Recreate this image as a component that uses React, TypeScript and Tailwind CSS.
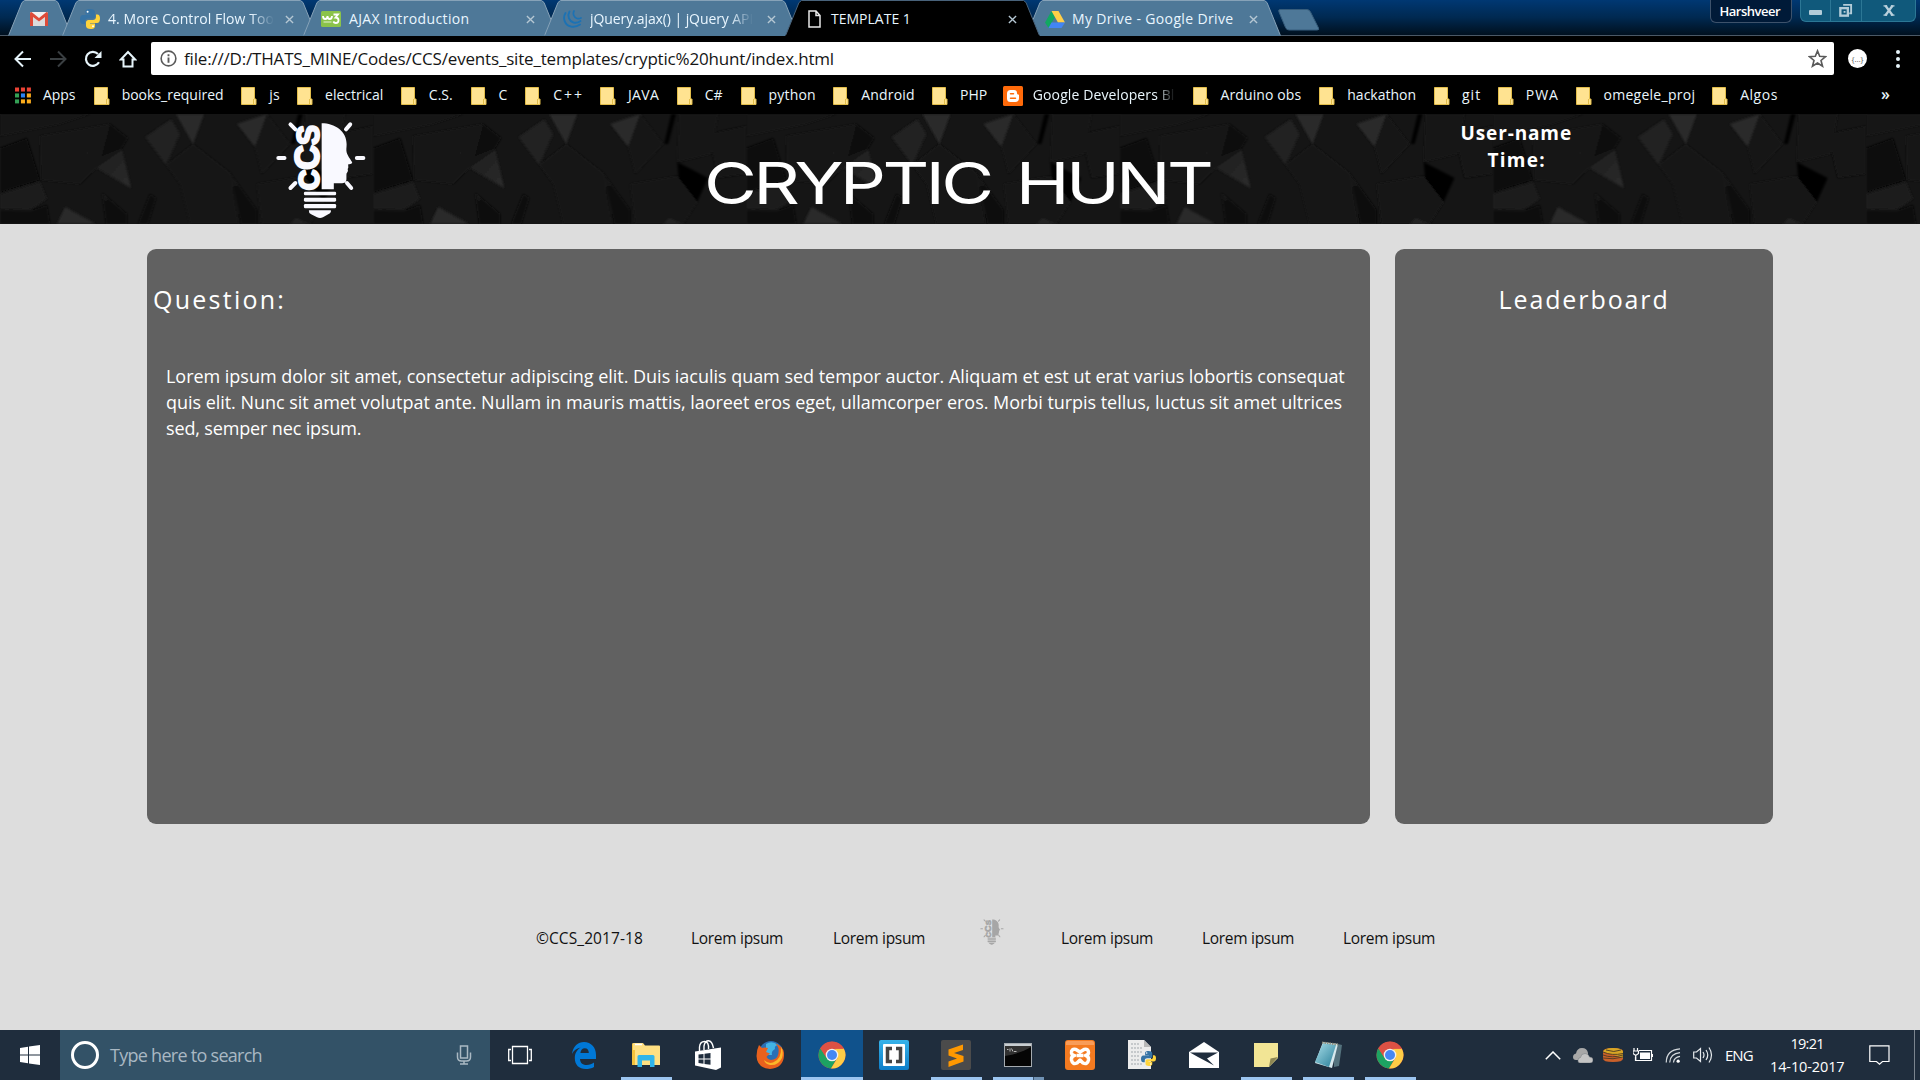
import { useLayoutEffect, useRef, useState } from "react";
import type { ReactNode } from "react";

/* Single line of text tracked out (or in) to fill a given measure. */
function Fit({ w, className = "", children }: { w: number; className?: string; children: string }) {
  const ref = useRef<HTMLSpanElement>(null);
  const [tracking, setTracking] = useState(0);
  useLayoutEffect(() => {
    const el = ref.current;
    if (!el) return;
    el.style.letterSpacing = "0px";
    const next = (w - el.offsetWidth) / Math.max(children.length - 1, 1);
    el.style.letterSpacing = next + "px";
    setTracking(next);
  }, [w, children]);
  return (
    <span className={"block shrink-0 whitespace-nowrap " + className} style={{ width: w }}>
      <span ref={ref} className="inline-block whitespace-pre" style={{ letterSpacing: tracking }}>
        {children}
      </span>
    </span>
  );
}

function Bulb({ className, color = "#f9f9ff" }: { className: string; color?: string }) {
  return (
    <svg viewBox="44 22 280 294" className={"overflow-visible " + className} fill={color} stroke="none" preserveAspectRatio="none">
      <path d="M186 29 C226 29 262 52 262 92 C262 102 260 108 262 116 C266 130 278 142 279 147 C278 151 270 151 267 152 C266 158 269 163 265 166 C268 171 264 176 262 179 C260 190 264 200 258 206 C250 212 232 207 223 209 L223 227 L186 227 Z" />
      <g stroke={color} strokeWidth="12" strokeLinecap="round">
        <path d="M54 133H73M293 133H313M91 32L106 47M273 32L260 47M91 223L106 208M276 223L263 208" />
      </g>
      <rect x="132" y="234" width="98" height="11" rx="4" />
      <rect x="132" y="252" width="98" height="12" rx="4" />
      <rect x="132" y="271" width="98" height="13" rx="4" />
      <path d="M147 290H214Q216 298 206 302L190 311Q181 315 172 311L154 302Q146 298 147 290Z" />
      <text
        transform="translate(178 230) rotate(-90)"
        fontFamily="Liberation Sans, sans-serif"
        fontWeight="700"
        textLength="196"
        lengthAdjust="spacingAndGlyphs"
        stroke={color}
        strokeWidth="7"
        strokeLinejoin="round"
      >
        <tspan fontSize="90">C</tspan>
        <tspan fontSize="108">C</tspan>
        <tspan fontSize="94">S</tspan>
      </text>
    </svg>
  );
}

/* ---------- browser chrome ---------- */

const GmailIcon = () => (
  <svg viewBox="0 0 18 14" className="h-[14px] w-[18px]">
    <rect width="18" height="14" rx="1.5" fill="#f1f1f1" />
    <path d="M3 14V5l6 4.5L15 5v9z" fill="#dcdcdc" />
    <path d="M0 14V1.5Q0 0 1.5 0L9 6l7.500-6Q18 0 18 1.500V14h-3V5L9 9.600 3 5v9z" fill="#dd4b39" />
  </svg>
);
const PythonIcon = ({ className }: { className: string }) => (
  <svg viewBox="0 0 20 20" className={className}>
    <path d="M10 0C6 0 5.500 1.500 5.500 3v2.500h5V6H3C1 6 0 8 0 10.500S1 15 3 15h2v-2.500C5 10.500 6.500 9.500 8 9.500h4.500c1.500 0 2.500-1 2.500-2.500V3c0-2-2-3-5-3z" fill="#3673a5" />
    <path d="M10.500 20c4 0 4.500-1.500 4.500-3v-2.500h-5V14h7c2 0 3-2 3-4.500S19 5.500 17.500 5.500H16V8c0 2-1.500 3-3 3H8.500C7 11 6 12 6 13.500V17c0 2 2 3 4.500 3z" fill="#ffd43b" />
    <circle cx="7.600" cy="2.800" r="1" fill="#fff" />
    <circle cx="13" cy="17.200" r="1" fill="#fff" />
  </svg>
);
const W3Icon = () => (
  <svg viewBox="0 0 20 16" className="h-4 w-5">
    <rect width="20" height="16" rx="1.500" fill="#8bc34a" />
    <path d="M2 5q0 3 2.200 3T6.500 5q0 3 2.200 3T11 5M12.500 3.500h4.500l-2.500 3q3 0 3 2.700t-2.700 2.800q-1.800 0-2.500-1.500" fill="none" stroke="#fff" strokeWidth="1.800" />
    <path d="M2.500 11h8" stroke="#e5f3d8" strokeWidth="1" />
  </svg>
);
const JqIcon = () => (
  <svg viewBox="0 0 20 18" className="h-[18px] w-5" fill="none" stroke="#1c72b4" strokeLinecap="round">
    <path d="M2.500 3C-.5 8 1.500 15 8 16.500q5 1 9-2" strokeWidth="1.900" />
    <path d="M6.500 1.500C4 6 6 11 10.500 12.500q4 .8 7-1.500" strokeWidth="1.900" />
    <path d="M11 1C9.500 4 11 7.500 14 8.500q2.500.5 4-.5" strokeWidth="1.700" />
  </svg>
);
const FileIcon = () => (
  <svg viewBox="0 0 13 18" className="h-[18px] w-[13px]" fill="none" stroke="#e8e8e8" strokeWidth="1.500">
    <path d="M1 1h7l4 4.500V17H1zM8 1v4.500h4" />
  </svg>
);
const DriveIcon = () => (
  <svg viewBox="0 0 20 17" className="h-[17px] w-5">
    <path d="M6.500 0L0 11.500 3.500 17 10 6z" fill="#11a861" />
    <path d="M6.500 0h7L20 11.500h-7z" fill="#ffcf48" />
    <path d="M6.500 11.500H20L16.500 17h-13z" fill="#4285f4" />
  </svg>
);

interface TabData {
  icon: ReactNode;
  title: string;
  w: number;
  iconBox: string;
  active?: boolean;
  fade?: boolean;
}
const tabs: TabData[] = [
  { icon: <PythonIcon className="h-5 w-5" />, title: "4. More Control Flow Too", w: 166, iconBox: "ml-[18px] w-[28px]", fade: true },
  { icon: <W3Icon />, title: "AJAX Introduction", w: 120, iconBox: "ml-[18px] w-[28px]" },
  { icon: <JqIcon />, title: "jQuery.ajax() | jQuery API", w: 163, iconBox: "ml-[19px] w-[27px]", fade: true },
  { icon: <FileIcon />, title: "TEMPLATE 1", w: 80, iconBox: "ml-[23px] w-[23px]", active: true },
  { icon: <DriveIcon />, title: "My Drive - Google Drive", w: 161, iconBox: "ml-[19px] w-[27px]" },
];

function Tab({ t }: { t: TabData }) {
  return (
    <div className={"relative -ml-[14px] flex h-9 w-[255px] shrink-0 items-center " + (t.active ? "z-10" : "")}>
      <svg viewBox="0 0 255 36" className="absolute inset-0 h-9 w-[255px]">
        <path d="M0 36L1 34.500 14 2.500 16.500 .5H238.500L241 2.500 254 34.500 255 36Z" fill={t.active ? "#000" : "#4e7898"} />
        <path d="M0 35.500L1 34.500 14 2.500 16.500 .5H238.500L241 2.500 254 34.500 255 35.500" fill="none" stroke={t.active ? "#48627a" : "#86a2b8"} strokeWidth="1" />
      </svg>
      <div className="relative flex h-full w-full items-center pt-[2px]">
        <span className={"flex shrink-0 items-center " + t.iconBox}>{t.icon}</span>
        <Fit w={t.w} className={"text-[14px] leading-5 text-[#e9f6ff] " + (t.fade ? "[mask-image:linear-gradient(90deg,#000_86%,transparent)]" : "")}>
          {t.title}
        </Fit>
        <svg viewBox="0 0 10 10" className="ml-auto mr-[23px] h-[9px] w-[9px]" stroke="#b5c7d3" strokeWidth="1.500">
          <path d="M1 1l8 8M9 1L1 9" />
        </svg>
      </div>
    </div>
  );
}

function TabStrip() {
  return (
    <div className="flex h-9 items-start border-b border-[#4a5866] bg-gradient-to-b from-[#003873] via-[#002951] to-[#00101f]">
      <div className="relative ml-2 mr-[4px] flex h-9 w-16 shrink-0 items-center justify-center">
        <svg viewBox="0 0 64 36" className="absolute inset-0 h-9 w-16">
          <path d="M0 35.500L1 34.500 14 2.500 16.500 .5H47.500L50 2.500 63 34.500 64 35.500" fill="#4e7898" stroke="#86a2b8" />
        </svg>
        <div className="relative pr-[2px] pt-[2px]">
          <GmailIcon />
        </div>
      </div>
      {tabs.map((t) => (
        <Tab key={t.title} t={t} />
      ))}
      <svg viewBox="0 0 44 24" className="-ml-[4px] mt-2 h-6 w-11 shrink-0">
        <path d="M3 1.500H30q2.500 0 3.500 2.500l8 16q1 2-1.500 2H12q-2.500 0-3.500-2.500L2 4Q1 1.500 3 1.500z" fill="#4e7898" stroke="#375d7c" />
      </svg>
      <div className="ml-auto flex h-[23px] w-[82px] items-start justify-center rounded-b-md border border-t-0 border-[#3d526b] bg-[#001a38]">
        <Fit w={61} className="-ml-[2px] text-[13px] font-semibold leading-[22px] text-white">
          Harshveer
        </Fit>
      </div>
      <div className="ml-[8px] mr-1 flex h-[22px] w-[116px] overflow-hidden rounded-b-md border border-t-0 border-[#2c7795] bg-[#10597b]">
        <div className="flex w-[30px] items-center justify-center border-r border-[#2c7795]">
          <span className="mt-1 h-[5px] w-[13px] rounded-[1px] bg-[#b3ccd8]" />
        </div>
        <div className="flex w-[31px] items-center justify-center border-r border-[#2c7795] pr-px">
          <svg viewBox="0 0 16 16" className="h-[15px] w-[15px]" fill="none" stroke="#b3ccd8">
            <path d="M5.500 2H14v9h-2" strokeWidth="2" />
            <rect x="2.500" y="5.500" width="8" height="8" strokeWidth="2.500" />
            <path d="M6 9.500h2" strokeWidth="2" />
          </svg>
        </div>
        <div className="flex flex-1 items-center justify-center">
          <svg viewBox="0 0 12 12" className="h-[11px] w-3" stroke="#b9d0dc" strokeWidth="2.500">
            <path d="M2 .5l8 11M10 .5L2 11.500" />
            <path d="M0 1h4M8 1h4M0 11h4M8 11h4" strokeWidth="1.500" />
          </svg>
        </div>
      </div>
    </div>
  );
}

function Toolbar() {
  return (
    <div className="flex h-[42px] items-center bg-black pt-[3px]">
      <div className="flex w-[151px] items-center pl-[14px]">
        <svg viewBox="0 0 18 18" className="h-[18px] w-[18px]" fill="none" stroke="#e6f4fa" strokeWidth="2">
          <path d="M17 9H2M9 1.500L1.500 9 9 16.500" />
        </svg>
        <svg viewBox="0 0 18 18" className="ml-[17px] h-[18px] w-[18px]" fill="none" stroke="#3a3f42" strokeWidth="2">
          <path d="M1 9h15M9 1.500L16.500 9 9 16.500" />
        </svg>
        <svg viewBox="0 0 18 18" className="ml-[17px] h-[18px] w-[18px]" fill="none" stroke="#e6f4fa" strokeWidth="2.200">
          <path d="M15 12.300A7 7 0 1 1 14 4" />
          <path d="M17.500 1v7h-7z" fill="#e6f4fa" stroke="none" />
        </svg>
        <svg viewBox="0 0 18 18" className="ml-[17px] h-[18px] w-[18px]" fill="none" stroke="#e6f4fa" strokeWidth="2">
          <path d="M9 2L1.800 9.500H4.500V16.500h9V9.500h2.700z" />
        </svg>
      </div>
      <div className="flex h-[33px] w-[1683px] items-center rounded-[2px] bg-white pl-[9px] pr-[7px]">
        <svg viewBox="0 0 18 18" className="h-[17px] w-[17px]" fill="none" stroke="#5a5a5a" strokeWidth="1.700">
          <circle cx="9" cy="9" r="7.800" />
          <path d="M9 8v5.500M9 4.500v2" strokeWidth="2" />
        </svg>
        <Fit w={650} className="ml-[7px] text-[17px] leading-6 text-[#151515]">
          file:///D:/THATS_MINE/Codes/CCS/events_site_templates/cryptic%20hunt/index.html
        </Fit>
        <svg viewBox="0 0 20 20" className="ml-auto h-[19px] w-[19px]" fill="none" stroke="#5a5a5a" strokeWidth="1.700">
          <path d="M10 2l2.300 5.700 6.200.4-4.800 4 1.600 6L10 14.800 4.700 18.100l1.600-6-4.800-4 6.200-.4z" />
        </svg>
      </div>
      <div className="ml-[14px] flex h-[19px] w-[19px] items-center justify-center rounded-full bg-white text-[8px] leading-none text-[#555]">
        {"{…}"}
      </div>
      <div className="ml-[29px] flex flex-col gap-[3px]">
        <span className="size-1 rounded-full bg-[#e6f4fa]" />
        <span className="size-1 rounded-full bg-[#e6f4fa]" />
        <span className="size-1 rounded-full bg-[#e6f4fa]" />
      </div>
    </div>
  );
}

const Folder = () => (
  <svg viewBox="0 0 16 18" className="h-[18px] w-4">
    <path d="M.5 .5h13v11.500h1.500v5.500H.5z" fill="#ffe391" stroke="#e2bd4a" />
    <path d="M12.500 12v5.500" stroke="#e2bd4a" />
  </svg>
);
const AppsIcon = () => (
  <svg viewBox="0 0 17 17" className="h-[17px] w-4">
    {["#ea4335", "#ea4335", "#ea4335", "#34a055", "#2b83f6", "#fbac1c", "#34a055", "#fbac1c", "#fbac1c"].map((c, i) => (
      <rect key={i} x={(i % 3) * 6.300} y={Math.floor(i / 3) * 6.300} width="4.300" height="4.300" fill={c} />
    ))}
  </svg>
);
const Blogger = () => (
  <svg viewBox="0 0 20 20" className="h-5 w-5">
    <rect width="20" height="20" rx="1.500" fill="#ff6a0a" />
    <path d="M7.500 4h3.500q3 0 3 3.200 0 1.300 1.300 1.300.7 0 .7.700V12q0 4-3.800 4H7.500Q4 16 4 12.500v-5Q4 4 7.500 4z" fill="#fff" />
    <path d="M7.500 7.700h3M7.500 12.300h5" stroke="#ff6a0a" strokeWidth="1.500" strokeLinecap="round" />
  </svg>
);

const bookmarks: [string, number][] = [
  ["Apps", 33], ["books_required", 102], ["js", 10], ["electrical", 58], ["C.S.", 24], ["C", 9], ["C++", 29],
  ["JAVA", 31], ["C#", 18], ["python", 47], ["Android", 53], ["PHP", 27], ["Google Developers Bl", 142],
  ["Arduino obs", 81], ["hackathon", 69], ["git", 18], ["PWA", 32], ["omegele_proj", 91], ["Algos", 37],
];

function Bookmarks() {
  return (
    <div className="flex h-9 items-center bg-black pb-px pl-[15px] pr-[30px]">
      {bookmarks.map(([name, w]) => {
        const blog = name.startsWith("Google");
        return (
          <div key={name} className="mr-[17.850px] flex shrink-0 items-center">
            {blog ? (
              <span className="-ml-[2px] mr-[10px]"><Blogger /></span>
            ) : (
              <span className="mr-[11.900px]">{name === "Apps" ? <AppsIcon /> : <Folder />}</span>
            )}
            <Fit w={w} className={"-mt-px text-[14px] leading-5 text-[#eaf6fc] " + (blog ? "[mask-image:linear-gradient(90deg,#000_87%,transparent)]" : "")}>
              {name}
            </Fit>
          </div>
        );
      })}
      <span className="-mt-[3px] ml-auto text-[16px] font-semibold leading-5 text-[#e6f4fa]">»</span>
    </div>
  );
}

/* ---------- page ---------- */

function RockTexture() {
  return (
    <svg className="absolute inset-0 h-full w-full" aria-hidden="true">
      <defs>
        <linearGradient id="g1" x1="0" x2="1" y1="0" y2="1">
          <stop offset="0" stopColor="#1c1c1c" />
          <stop offset="1" stopColor="#2c2c2c" />
        </linearGradient>
        <linearGradient id="g2" x1="0" x2="0" y1="0" y2="1">
          <stop offset="0" stopColor="#151515" />
          <stop offset="1" stopColor="#080808" />
        </linearGradient>
        <filter id="soft"><feGaussianBlur stdDeviation="0.800" /></filter>
        <pattern id="rock" width="373.200" height="110" patternUnits="userSpaceOnUse">
          <rect width="374" height="110" fill="#151515" />
          <g filter="url(#soft)">
            <path d="M0 0H90L60 10 0 22z" fill="#191919" />
            <path d="M40 22L110 10 122 36 96 54 80 70 41 66z" fill="#171717" />
            <path d="M0 34L27 24 40 66 8 76 0 79z" fill="#070707" />
            <path d="M0 80L40 68 47 85 30 96 0 95z" fill="#1f1f1f" />
            <path d="M0 96L30 97 47 91 50 110 0 110z" fill="#0a0a0a" />
            <path d="M110 10L128 24 122 34 102 42z" fill="#0c0c0c" />
            <path d="M122 36L131 74 96 54z" fill="url(#g1)" />
            <path d="M145 23L171 5 180 20 166 51z" fill="#212121" />
            <path d="M176 0H204L193 30z" fill="#2b2b2b" />
            <path d="M166 51L193 30 230 59 239 110 190 110 180 70z" fill="#181818" />
            <path d="M237 10L267 0 255 33z" fill="#292929" />
            <path d="M267 0L290 30 262 60 255 33z" fill="#171717" />
            <path d="M291 30L298 0H303L295 30z" fill="#060606" />
            <path d="M306 0H345L338 40 304 48z" fill="#181818" />
            <path d="M304 48L335 64 324 88 306 71z" fill="#060606" />
            <path d="M335 20L373 12V60L345 64z" fill="#121212" />
            <path d="M230 59L257 96V110H241z" fill="url(#g2)" />
            <path d="M257 70L304 62 324 88 310 110H262z" fill="#181818" />
            <path d="M102 79L127 100V110H106z" fill="url(#g2)" />
            <path d="M150 80L156 84 148 110H138z" fill="#0e0e0e" />
            <path d="M65 93L96 110H57z" fill="#2a2a2a" />
            <path d="M76 70Q76 50 90 36" fill="none" stroke="#1f1f1f" />
            <path d="M296 104L310 110H290z" fill="#242424" />
          </g>
        </pattern>
      </defs>
      <rect width="100%" height="100%" fill="url(#rock)" />
    </svg>
  );
}

function Header() {
  return (
    <header className="relative h-[110px] overflow-hidden bg-[#151515]">
      <RockTexture />
      <div className="relative flex h-full text-white">
        <div className="w-[704px] pl-[275px] pt-[7px]">
          <Bulb className="h-[98px] w-[92px]" />
        </div>
        <h1 className="w-[756px] pt-[36px]">
          <span className="block w-[408px] origin-left scale-x-125 [word-spacing:7px]">
            <Fit w={408} className="font-['Inter'] text-[58px] leading-[66px]">
              CRYPTIC HUNT
            </Fit>
          </span>
        </h1>
        <div className="flex w-[112px] flex-col items-center pt-[6px] text-[19px] font-bold leading-[27px]">
          <Fit w={111}>User-name</Fit>
          <Fit w={57}>Time:</Fit>
        </div>
      </div>
    </header>
  );
}

function Page() {
  return (
    <main className="flex-1 bg-[#dddddd]">
      <div className="flex gap-[25px] pl-[147px] pt-[25px] text-white">
        <section className="h-[575px] w-[1223px] rounded-[9px] bg-[#616161] pl-[6px] pt-[32px]">
          <Fit w={131} className="text-[25px] leading-9">Question:</Fit>
          <div className="ml-[13px] mt-[46px] text-[18px] leading-[26px]">
            <Fit w={1179}>
              Lorem ipsum dolor sit amet, consectetur adipiscing elit. Duis iaculis quam sed tempor auctor. Aliquam et est ut erat varius lobortis consequat
            </Fit>
            <Fit w={1176}>
              quis elit. Nunc sit amet volutpat ante. Nullam in mauris mattis, laoreet eros eget, ullamcorper eros. Morbi turpis tellus, luctus sit amet ultrices
            </Fit>
            <Fit w={196}>sed, semper nec ipsum.</Fit>
          </div>
        </section>
        <section className="flex h-[575px] w-[378px] flex-col items-center rounded-[9px] bg-[#616161] pr-[2px] pt-[32px]">
          <Fit w={169} className="text-[25px] leading-9">Leaderboard</Fit>
        </section>
      </div>
      <footer className="flex items-start pl-[536px] pt-[95px] text-[15.500px] leading-6 text-[#111]">
        <Fit w={107} className="mr-[48px] mt-[7px]">©CCS_2017-18</Fit>
        <Fit w={92} className="mr-[50px] mt-[7px]">Lorem ipsum</Fit>
        <Fit w={92} className="mr-[55px] mt-[7px]">Lorem ipsum</Fit>
        <Bulb className="mr-[57px] h-[26px] w-[24px]" color="#a6a6a6" />
        <Fit w={92} className="mr-[49px] mt-[7px]">Lorem ipsum</Fit>
        <Fit w={92} className="mr-[49px] mt-[7px]">Lorem ipsum</Fit>
        <Fit w={92} className="mt-[7px]">Lorem ipsum</Fit>
      </footer>
    </main>
  );
}

/* ---------- taskbar ---------- */

const ChromeIcon = () => (
  <svg viewBox="0 0 28 28" className="h-7 w-7">
    <circle cx="14" cy="14" r="13.500" fill="#dd5144" />
    <path d="M2.300 7.300A13.500 13.500 0 0 0 13 27.500L19 17 9 17z" fill="#1da362" />
    <path d="M25.700 7.500A13.500 13.500 0 0 1 13 27.500L19.500 17 17 7.700z" fill="#ffcd46" />
    <path d="M2.300 7.300L8.500 17 9 10 14 7.700H25.800A13.500 13.500 0 0 0 2.300 7.300z" fill="#dd5144" />
    <circle cx="14" cy="14" r="6.300" fill="#f1f1f1" />
    <circle cx="14" cy="14" r="5" fill="#4587f4" />
  </svg>
);
const EdgeIcon = () => (
  <svg viewBox="0 0 30 27" className="h-[27px] w-[24px]" preserveAspectRatio="none">
    <path d="M0 12C1.500 4 7.500 0 15 0c9 0 15 5.500 15 13v4H10c.3 4.500 4 6 8.500 6 3.500 0 6.500-1 9-2.500V25c-3 1.500-6.500 2-10.500 2C9 27 3.500 23 3.500 16c0-5 3-8.500 7.500-10.500C6.500 6 2.500 8 0 12zm10.500-1H21c0-3-1.800-4.800-5-4.800s-5 2-5.500 4.800z" fill="#0078d7" />
  </svg>
);
const ExplorerIcon = () => (
  <svg viewBox="0 0 28 24" className="h-6 w-7">
    <path d="M0 1.500Q0 0 1.500 0H11l2 2.500h14q1 0 1 1V22H0z" fill="#ffe082" />
    <path d="M3 1.500h7" stroke="#fff" strokeWidth="1.500" />
    <path d="M0 1.500V22h3V7H1V0z" fill="#f5c33b" />
    <path d="M5.500 24V13.500Q5.500 12 7 12H21q1.500 0 1.500 1.500V24h-4.500v-6.500h-8V24z" fill="#30b5ea" />
  </svg>
);
const StoreIcon = () => (
  <svg viewBox="0 0 26 30" className="h-[30px] w-[26px]">
    <path d="M0 11.500L26 7.500V27.500L21 30 0 25.500z" fill="#fff" />
    <path d="M4.500 11V7Q5 1.500 9.500 1.500T13.500 9M9 10V6Q10 .8 13.500.8T18.500 8" fill="none" stroke="#fff" strokeWidth="1.400" />
    <path d="M3.500 14.500l5-.6v4.600h-5zM9.500 13.700l6-.8v5.600h-6zM3.500 19.500h5v4.300l-5-.7zM9.500 19.500h6v5.300l-6-.8z" fill="#1f2d3d" />
  </svg>
);
const FirefoxIcon = () => (
  <svg viewBox="0 0 28 28" className="h-7 w-7">
    <circle cx="15" cy="12" r="12" fill="#2a6fb5" />
    <path d="M10 3Q16-1 22 4q-4 1-3 4-4 2-3 6h-6z" fill="#42b4e6" />
    <path d="M3 4l3 3q3-1 6 0l-2 4 4 1.500Q11 15 10.500 16q2 4 7 2.500 6-2 5-11-1-3-3-5Q29 6 28 15q-1 12-14 13Q1 27 .5 15 .5 9 3 4z" fill="#e9611d" />
    <path d="M25 6q3 5 1 11-4 8-12 7-5-1-6-5 4 4 9 2.500Q26 18 25 6z" fill="#fbb829" />
  </svg>
);
const BracketsIcon = () => (
  <svg viewBox="0 0 30 30" className="h-[30px] w-[30px]">
    <defs>
      <linearGradient id="br" x2="0" y2="1"><stop stopColor="#37b3ea" /><stop offset="1" stopColor="#0d7dc8" /></linearGradient>
    </defs>
    <rect width="30" height="30" rx="2" fill="url(#br)" />
    <rect x="4" y="4" width="22" height="22" rx="1" fill="#fff" />
    <path d="M13 8.500H8.500v13H13M17 8.500h4.500v13H17" fill="none" stroke="#454545" strokeWidth="3.500" />
  </svg>
);
const SublimeIcon = () => (
  <svg viewBox="0 0 30 30" className="h-[30px] w-[30px]">
    <rect width="30" height="30" rx="2" fill="#4b4b4b" />
    <path d="M7.500 9.500L22 4.500v5.500l-9 3 9.500 3v5.500L7.500 27v-5.500l8.500-3-8.500-3z" fill="#ff9800" />
  </svg>
);
const CmdIcon = () => (
  <svg viewBox="0 0 28 24" className="h-6 w-7">
    <rect x=".5" y=".5" width="27" height="23" fill="#050505" stroke="#a5abb0" />
    <path d="M1 13Q18 10 27 4V3H1z" fill="#313131" />
    <rect x="1" y="1" width="26" height="2" fill="#c8ced2" />
    <path d="M3 6.500h1.500M6 5.500v3M7.500 5.500l1.500 3M10 8.500h2.500" stroke="#ddd" strokeWidth=".8" />
  </svg>
);
const XamppIcon = () => (
  <svg viewBox="0 0 30 30" className="h-[30px] w-[30px]">
    <rect width="30" height="30" rx="3" fill="#f47a20" />
    <path d="M1 2Q1 1 3 1h24q2 0 2 2v2H1z" fill="#f99c58" />
    <path d="M15 12L11 9.500Q6 8.500 6.500 13q.5 2.500 3 2.500Q6 16 6.500 20q1 5 5.500 3l3-3 3 3q4.500 2 5.500-3 .5-4-3-4.500 3-.5 3-3Q23.500 8.500 19 9.500L15 12zM11.500 15.500h7" fill="none" stroke="#fff" strokeWidth="3.500" strokeLinejoin="round" />
  </svg>
);
const PyFileIcon = () => (
  <div className="relative h-[30px] w-[28px]">
    <svg viewBox="0 0 28 30" className="h-[30px] w-7">
      <path d="M0 0h16l7 7v22H0z" fill="#ececec" />
      <path d="M16 0v7h7z" fill="#b8b8b8" />
      <path d="M3 4h9M3 8h11M3 12h12M3 16h9M3 20h9M3 24h12" stroke="#a0a6ab" strokeDasharray="2 1" />
    </svg>
    <div className="absolute bottom-[3px] right-0"><PythonIcon className="h-[17px] w-[15px]" /></div>
  </div>
);
const MailIcon = () => (
  <svg viewBox="0 0 30 26" className="h-[26px] w-[30px]">
    <path d="M0 10L15 0l15 10v16H0z" fill="#fff" />
    <path d="M1 10.500H29L18 16.500l7 7L9 15z" fill="#1f2d3d" />
  </svg>
);
const StickyIcon = () => (
  <svg viewBox="0 0 24 24" className="h-6 w-6">
    <path d="M0 0h24v15l-9 9H0z" fill="#f2e595" />
    <path d="M15 24l1.500-8.500L24 14z" fill="#8c8653" />
  </svg>
);
const NotepadIcon = () => (
  <svg viewBox="0 0 28 28" className="h-7 w-7">
    <defs>
      <linearGradient id="np" x2="1" y2="1"><stop stopColor="#a9dfea" /><stop offset="1" stopColor="#277d97" /></linearGradient>
    </defs>
    <path d="M20 2l8 2-3 21-5 1z" fill="#54727d" />
    <path d="M9 1L24 3 18 27 1 22z" fill="#d7e9ed" />
    <path d="M9 2L22 4 15 26 1 21z" fill="url(#np)" />
    <path d="M8 1.500L24 3.500" stroke="#8d8d7a" strokeWidth="2" strokeDasharray="1.500 1" />
  </svg>
);

const apps: [string, ReactNode, "none" | "open" | "active" | "stack"][] = [
  ["edge", <EdgeIcon />, "none"],
  ["explorer", <ExplorerIcon />, "open"],
  ["store", <StoreIcon />, "none"],
  ["firefox", <FirefoxIcon />, "none"],
  ["chrome", <ChromeIcon />, "active"],
  ["brackets", <BracketsIcon />, "none"],
  ["sublime", <SublimeIcon />, "open"],
  ["cmd", <CmdIcon />, "stack"],
  ["xampp", <XamppIcon />, "none"],
  ["python", <PyFileIcon />, "none"],
  ["mail", <MailIcon />, "none"],
  ["sticky", <StickyIcon />, "open"],
  ["notepad", <NotepadIcon />, "open"],
  ["chrome-app", <ChromeIcon />, "open"],
];

function Taskbar() {
  return (
    <div className="flex h-[50px] items-stretch bg-[#1f2d3d] text-white">
      <div className="flex w-[60px] items-center justify-center">
        <svg viewBox="0 0 20 20" className="h-5 w-5" fill="#fff">
          <path d="M0 3l8-1.200V9.500H0zM9 1.600L20 0v9.500H9zM0 10.500h8v7.700L0 17zM9 10.500h11V20L9 18.400z" />
        </svg>
      </div>
      <div className="flex w-[430px] items-center bg-[#335267] pl-[11px] pr-[18px]">
        <span className="size-[28px] shrink-0 rounded-full border-[3.500px] border-white" />
        <Fit w={153} className="ml-[11px] text-[18px] leading-6 text-[#a9b8c3]">Type here to search</Fit>
        <svg viewBox="0 0 16 20" className="ml-auto h-5 w-4" fill="none" stroke="#aab9c3" strokeWidth="1.500">
          <rect x="4.500" y="1" width="7" height="12" />
          <path d="M1.500 7.500V12q0 4 4 4h5q4 0 4-4V7.500M8 16v3M4 19h8" />
        </svg>
      </div>
      <div className="flex w-[63px] items-center justify-center pr-[3px]">
        <svg viewBox="0 0 24 20" className="h-5 w-6" fill="none" stroke="#fff" strokeWidth="1.300">
          <path d="M4.500 1.500h15v17h-15zM3 4.500H.7v11H3M21 4.500h2.300v11H21" />
        </svg>
      </div>
      {apps.map(([name, icon, state]) => (
        <div key={name} className={"relative flex w-[62px] items-center justify-center " + (state === "active" ? "bg-[#10528c]" : "")}>
          {icon}
          {state !== "none" && (
            <span className={"absolute bottom-0 flex h-[3px] bg-[#9cc5f0] " + (state === "active" ? "inset-x-0" : "left-[6px] right-[5px]")}>
              {state === "stack" && <span className="ml-auto w-[11px] border-l border-[#3c5672] bg-[#7193b5]" />}
            </span>
          )}
        </div>
      ))}
      <div className="ml-auto flex items-center">
        <svg viewBox="0 0 16 9" className="mr-[12px] h-[9px] w-4" fill="none" stroke="#fff" strokeWidth="1.500">
          <path d="M.8 8.300L8 1l7.200 7.300" />
        </svg>
        <svg viewBox="0 0 20 15" className="mr-[10px] h-[15px] w-5">
          <path d="M3 12Q0 12 0 9t3-3.500Q4 0 9 0t6 5v7z" fill="#a8a8a8" />
          <path d="M7 15Q4.500 14.500 5 12q0-2 2.500-2.500Q8 5.500 12 5.500q3.500 0 4.500 3.500Q20 9 20 12t-3 3z" fill="#c4c4c4" stroke="#6e747a" strokeWidth=".5" />
        </svg>
        <svg viewBox="0 0 20 14" className="mr-[10px] h-[14px] w-5">
          <path d="M0 3.500Q0 0 10 0t10 3.500v7Q20 14 10 14T0 10.500z" fill="#c9602a" />
          <path d="M0 4Q1 0 10 0t10 3.500V10Q12 7 0 4z" fill="#d7a625" />
          <path d="M0 4q9 4 20 1.500M0 7q9 3.500 20 0M0 10q10 2 20-1M3 2q8 3 15 0" fill="none" stroke="#4c3a24" strokeWidth=".9" />
        </svg>
        <svg viewBox="0 0 20 14" className="mr-[12px] h-[14px] w-5" fill="none" stroke="#fff" strokeWidth="1.200">
          <path d="M6 2.500h12.500v10H2.500V9M19.500 6v3" />
          <rect x="7" y="4.500" width="10" height="6.500" fill="#fff" stroke="none" />
          <path d="M1 0v3M4.500 0v3M0 3h5.500v2.500L3.500 7H2L0 5.500zM2.700 7v5" />
        </svg>
        <svg viewBox="0 0 16 16" className="mr-[12px] h-[15px] w-4" fill="none" stroke="#d5dade" strokeWidth="1.300">
          <path d="M.8 15.500Q1 2 15.500 1M4.500 15.500Q5 6 15.500 5M8.500 15.500Q9 10 15.500 9" />
          <circle cx="13.500" cy="14" r="1.700" fill="#fff" stroke="none" />
        </svg>
        <svg viewBox="0 0 20 18" className="mr-[12px] h-[18px] w-5" fill="none" stroke="#e6eaed" strokeWidth="1.200">
          <path d="M.7 6h2.800L7.500 2.500v13L3.500 12H.7z" />
          <path d="M10 6q2 3 0 6M13 4q3.500 5 0 10M16 1.500q5 7.500 0 15" />
        </svg>
        <Fit w={29} className="text-[15px] leading-6">ENG</Fit>
        <div className="ml-[16px] flex w-[75px] flex-col items-center pb-px text-[14.500px] leading-[23px]">
          <Fit w={34}>19:21</Fit>
          <Fit w={75}>14-10-2017</Fit>
        </div>
        <svg viewBox="0 0 21 20" className="ml-[24px] h-5 w-[21px]" fill="none" stroke="#fff" strokeWidth="1.200">
          <path d="M.8 .8H20v15.700H13.500l-3 2.700-3-2.700H.8z" />
        </svg>
        <span className="ml-[24px] mr-[5px] h-[50px] w-px bg-[#7b858f]" />
      </div>
    </div>
  );
}

export default function App() {
  return (
    <div className="flex h-[1080px] w-[1920px] flex-col overflow-hidden bg-[#dddddd] font-['Open_Sans','Noto_Sans',sans-serif]">
      <TabStrip />
      <Toolbar />
      <Bookmarks />
      <Header />
      <Page />
      <Taskbar />
    </div>
  );
}
